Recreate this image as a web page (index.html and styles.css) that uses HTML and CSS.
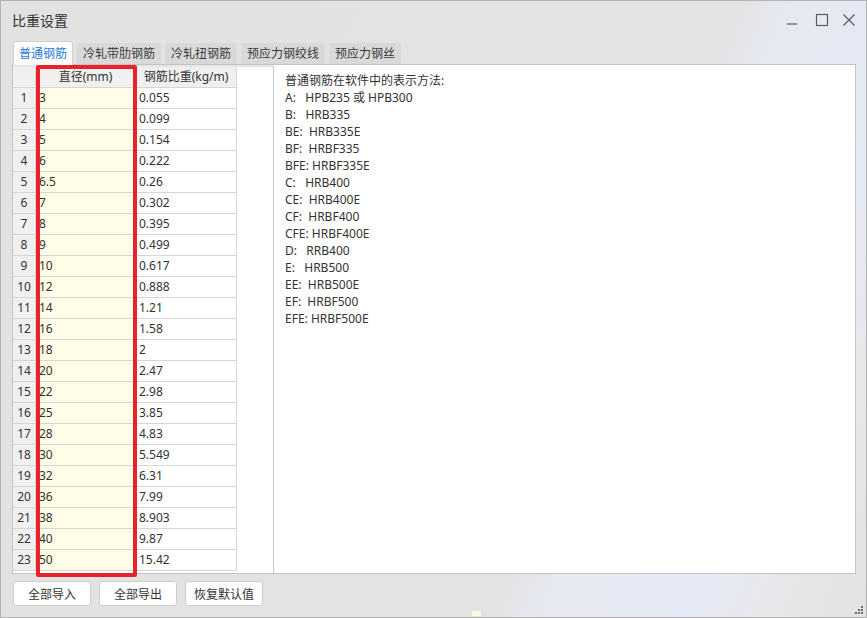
FILE: index.html
```html
<!DOCTYPE html>
<html lang="zh-CN">
<head>
<meta charset="utf-8">
<title>比重设置</title>
<link rel="stylesheet" href="styles.css">
</head>
<body>
<div class="window">
  <div class="titlebar">
    <span class="title">比重设置</span>
    <div class="controls">
      <svg class="ctl min" width="14" height="14" viewBox="0 0 14 14"><path d="M2 11H12" stroke="#5a5a5a" stroke-width="1.2" fill="none"/></svg>
      <svg class="ctl" width="14" height="14" viewBox="0 0 14 14"><rect x="1.5" y="1.5" width="11" height="11" stroke="#5a5a5a" stroke-width="1.2" fill="none"/></svg>
      <svg class="ctl" width="14" height="14" viewBox="0 0 14 14"><path d="M1.5 1.5L12.5 12.5M12.5 1.5L1.5 12.5" stroke="#5a5a5a" stroke-width="1.2" fill="none"/></svg>
    </div>
  </div>
  <div class="tabs">
    <div class="tab active">普通钢筋</div>
    <div class="tab">冷轧带肋钢筋</div>
    <div class="tab">冷轧扭钢筋</div>
    <div class="tab">预应力钢绞线</div>
    <div class="tab">预应力钢丝</div>
  </div>
  <div class="content">
    <div class="table-panel">
      <div class="grid">
        <div class="row head"><div class="c n"></div><div class="c d">直径(mm)</div><div class="c w">钢筋比重(kg/m)</div></div>
        <div class="row"><div class="c n">1</div><div class="c d">3</div><div class="c w">0.055</div></div>
        <div class="row"><div class="c n">2</div><div class="c d">4</div><div class="c w">0.099</div></div>
        <div class="row"><div class="c n">3</div><div class="c d">5</div><div class="c w">0.154</div></div>
        <div class="row"><div class="c n">4</div><div class="c d">6</div><div class="c w">0.222</div></div>
        <div class="row"><div class="c n">5</div><div class="c d">6.5</div><div class="c w">0.26</div></div>
        <div class="row"><div class="c n">6</div><div class="c d">7</div><div class="c w">0.302</div></div>
        <div class="row"><div class="c n">7</div><div class="c d">8</div><div class="c w">0.395</div></div>
        <div class="row"><div class="c n">8</div><div class="c d">9</div><div class="c w">0.499</div></div>
        <div class="row"><div class="c n">9</div><div class="c d">10</div><div class="c w">0.617</div></div>
        <div class="row"><div class="c n">10</div><div class="c d">12</div><div class="c w">0.888</div></div>
        <div class="row"><div class="c n">11</div><div class="c d">14</div><div class="c w">1.21</div></div>
        <div class="row"><div class="c n">12</div><div class="c d">16</div><div class="c w">1.58</div></div>
        <div class="row"><div class="c n">13</div><div class="c d">18</div><div class="c w">2</div></div>
        <div class="row"><div class="c n">14</div><div class="c d">20</div><div class="c w">2.47</div></div>
        <div class="row"><div class="c n">15</div><div class="c d">22</div><div class="c w">2.98</div></div>
        <div class="row"><div class="c n">16</div><div class="c d">25</div><div class="c w">3.85</div></div>
        <div class="row"><div class="c n">17</div><div class="c d">28</div><div class="c w">4.83</div></div>
        <div class="row"><div class="c n">18</div><div class="c d">30</div><div class="c w">5.549</div></div>
        <div class="row"><div class="c n">19</div><div class="c d">32</div><div class="c w">6.31</div></div>
        <div class="row"><div class="c n">20</div><div class="c d">36</div><div class="c w">7.99</div></div>
        <div class="row"><div class="c n">21</div><div class="c d">38</div><div class="c w">8.903</div></div>
        <div class="row"><div class="c n">22</div><div class="c d">40</div><div class="c w">9.87</div></div>
        <div class="row"><div class="c n">23</div><div class="c d">50</div><div class="c w">15.42</div></div>
      </div>
    </div>
    <div class="text-panel">
<div class="line">普通钢筋在软件中的表示方法:</div>
<div class="line">A:   HPB235 或 HPB300</div>
<div class="line">B:   HRB335</div>
<div class="line">BE:  HRB335E</div>
<div class="line">BF:  HRBF335</div>
<div class="line">BFE: HRBF335E</div>
<div class="line">C:   HRB400</div>
<div class="line">CE:  HRB400E</div>
<div class="line">CF:  HRBF400</div>
<div class="line">CFE: HRBF400E</div>
<div class="line">D:   RRB400</div>
<div class="line">E:   HRB500</div>
<div class="line">EE:  HRB500E</div>
<div class="line">EF:  HRBF500</div>
<div class="line">EFE: HRBF500E</div>
    </div>
  </div>
  <div class="buttons">
    <button class="btn">全部导入</button>
    <button class="btn">全部导出</button>
    <button class="btn">恢复默认值</button>
  </div>
  <div class="highlight"></div>
  <div class="speck"></div>
  <svg class="grip" width="8" height="8" viewBox="0 0 8 8">
    <rect x="6" y="0" width="2" height="2" fill="#6a6a6a"/>
    <rect x="3" y="3" width="2" height="2" fill="#6a6a6a"/>
    <rect x="6" y="3" width="2" height="2" fill="#6a6a6a"/>
    <rect x="0" y="6" width="2" height="2" fill="#6a6a6a"/>
    <rect x="3" y="6" width="2" height="2" fill="#6a6a6a"/>
    <rect x="6" y="6" width="2" height="2" fill="#6a6a6a"/>
  </svg>
</div>
</body>
</html>
```
FILE: styles.css
```css
* { box-sizing: border-box; }
html, body { margin: 0; padding: 0; }
body {
  font-family: "Noto Sans", "Noto Sans CJK SC", sans-serif;
  font-size: 12px;
  color: #333;
}
.window {
  position: relative;
  width: 867px;
  height: 618px;
  border: 1px solid #b3b3b3;
  background: linear-gradient(112deg, #e2e2e2 0%, #e3e3e3 66%, #e6e9f1 71%, #e5e9f5 84%, #e8e8ec 90%, #e2e2e2 100%);
  display: flex;
  flex-direction: column;
  overflow: hidden;
}
.titlebar {
  height: 40px;
  display: flex;
  align-items: center;
  justify-content: space-between;
  padding: 0 10px 2px 11px;
}
.title {
  font-family: "Noto Sans CJK SC", sans-serif;
  font-size: 14px;
  color: #333;
}
.controls {
  display: flex;
  gap: 13px;
  align-items: center;
}
.ctl { display: block; }
.ctl.min { margin-right: 3px; }
.tabs {
  display: flex;
  align-items: flex-end;
  gap: 4px;
  padding-left: 12px;
  height: 23px;
}
.tab {
  font-family: "Noto Sans CJK SC", sans-serif;
  font-size: 12px;
  height: 21px;
  line-height: 20px;
  padding: 0 6px;
  background: #d9d9d9;
  color: #3a3a3a;
  border-radius: 3px 3px 0 0;
}
.tab.active {
  height: 24px;
  line-height: 22px;
  margin-bottom: -1px;
  padding: 0 5px;
  background: #fff;
  color: #1f78d8;
  border: 1px solid #cfcfcf;
  border-bottom: none;
  position: relative;
  z-index: 1;
}
.content {
  height: 510px;
  margin: 0 10px 0 11px;
  display: flex;
  border: 1px solid #c4c4c4;
  background: #fff;
}
.table-panel {
  width: 261px;
  border-right: 1px solid #c4c4c4;
  border-top: 2px solid #e6e6e6;
  background: #fff;
}
.grid {
  display: flex;
  flex-direction: column;
  width: 224px;
}
.row {
  display: grid;
  grid-template-columns: 23px 100px 101px;
  height: 21px;
}
.c {
  height: 21px;
  line-height: 20px;
  border-right: 1px solid #d6d6d6;
  border-bottom: 1px solid #d6d6d6;
  padding-left: 3px;
  white-space: nowrap;
  overflow: hidden;
  color: #333;
}
.c.n {
  background: #f0f0f0;
  text-align: center;
  padding-left: 0;
}
.c.d {
  background: #fffce8;
}
.row.head .c {
  background: #f0f0f0;
  text-align: center;
  padding-left: 0;
}
.text-panel {
  flex: 1;
  padding: 7px 11px;
  background: #fff;
}
.line {
  white-space: pre;
  line-height: 17px;
  color: #333;
}
.buttons {
  display: flex;
  gap: 8px;
  padding: 7px 0 0 12px;
}
.btn {
  width: 78px;
  height: 25px;
  background: #fff;
  border: 1px solid #cdcdcd;
  border-radius: 3px;
  font-family: "Noto Sans CJK SC", sans-serif;
  font-size: 12px;
  color: #333;
  padding: 0;
}
.highlight {
  position: absolute;
  left: 35px;
  top: 64px;
  width: 101px;
  height: 512px;
  border: 4px solid #e8212b;
  border-radius: 2px;
}
.speck {
  position: absolute;
  left: 471px;
  top: 610px;
  width: 9px;
  height: 5px;
  background: #fbf8dc;
}
.grip {
  position: absolute;
  right: 3px;
  bottom: 3px;
}
```
